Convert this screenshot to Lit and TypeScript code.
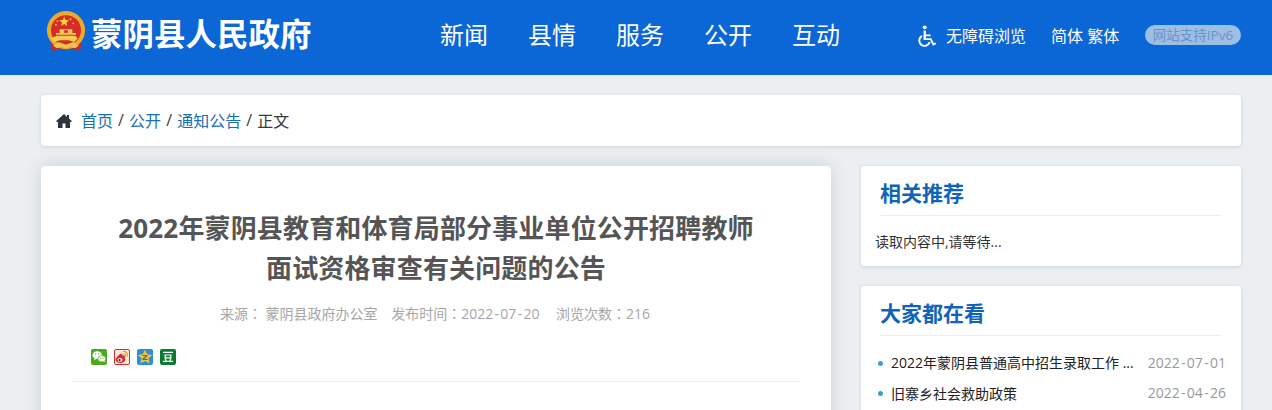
import { LitElement, html, css, svg } from "lit";
import { customElement } from "lit/decorators.js";

const emblem = svg`<svg class="emblem" viewBox="0 0 44 46" width="40" height="42">
  <path d="M7 32h30l2 8-4 4-6-3-7 2-7-2-6 3-4-4z" fill="#c9292a"/>
  <circle cx="22" cy="21" r="21" fill="#e8ab2c"/>
  <circle cx="22" cy="21" r="16.500" fill="#d62c27"/>
  <path d="M20 6l1.500 3.800 4 .2-3.100 2.500 1 3.900-3.400-2.200-3.400 2.200 1-3.900-3.100-2.500 4-.2z" fill="#f6d23f"/>
  <circle cx="12.500" cy="11" r="1" fill="#f6d23f"/><circle cx="27" cy="9" r="1" fill="#f6d23f"/><circle cx="30" cy="13.500" r="1" fill="#f6d23f"/><circle cx="11" cy="15" r="1" fill="#f6d23f"/>
  <path d="M11 24h22v2H11zM15 20h14v4H15zM12 27h20l3 3-4 4-6-2h-10l-6 2-4-4z" fill="#f4cb52"/>
  <path d="M20 21h4v3h-4z" fill="#d62c27"/>
  <path d="M8 38l6-4 8 3 8-3 6 4-4 3-5-2-5 2-5-2-5 2z" fill="#f2c64a"/>
</svg>`;

const wheelchair = svg`<svg class="wc" viewBox="0 0 20 24" width="18" height="22" fill="#fff">
  <circle cx="7.500" cy="2.400" r="2.200"/>
  <path d="M6.200 6h2.600v4.200h5.200v2H8.800v2.300h6l2.800 5.600 1.900-.8.800 1.800-3.700 1.600-3.100-6.200H6.200z"/>
  <path d="M4.600 10.800v2.300a4.800 4.800 0 1 0 7.200 5.600h2.200A6.900 6.900 0 1 1 4.600 10.800z"/>
</svg>`;

const home = svg`<svg class="home" viewBox="0 0 16 14" width="16" height="14">
  <path d="M8 0L0 7.200l1 1.100L2 7.400V14h4.500V9.500h3V14H14V7.400l1 .9 1-1.100-3-2.700V1h-2v2.100z" fill="#2b3340"/>
</svg>`;

const wechat = svg`<svg class="si" viewBox="0 0 16 16" width="16" height="16">
  <rect width="16" height="16" rx="2" fill="#4aab1c"/>
  <ellipse cx="6.200" cy="6.200" rx="4.700" ry="3.900" fill="#fff"/><path d="M3.800 9l-.6 2.200 2.600-1.400z" fill="#fff"/>
  <ellipse cx="10.800" cy="9.800" rx="3.900" ry="3.200" fill="#fff" stroke="#4aab1c" stroke-width=".7"/><path d="M12.400 12.300l1.400 1.100-.3-2z" fill="#fff"/>
  <circle cx="4.700" cy="5" r=".7" fill="#4aab1c"/><circle cx="7.800" cy="5" r=".7" fill="#4aab1c"/>
  <circle cx="9.500" cy="9.200" r=".5" fill="#4aab1c"/><circle cx="12" cy="9.200" r=".5" fill="#4aab1c"/>
</svg>`;
const weibo = svg`<svg class="si" viewBox="0 0 16 16" width="16" height="16">
  <rect x=".5" y=".5" width="15" height="15" rx="1.500" fill="#fbe9d8" stroke="#cf3030"/>
  <ellipse cx="6.400" cy="10.600" rx="4.900" ry="3.300" fill="#d8282f"/>
  <path d="M2.500 9c1.800-3.700 5-5.300 5.800-3.800.3 1 .1 1.600.1 1.600s2.200-.7 2.700.3c.3.700-.1 1.500-.1 1.500z" fill="#d8282f"/>
  <ellipse cx="6" cy="10.800" rx="2.500" ry="1.900" fill="#fff"/><circle cx="5.600" cy="11" r="1.100" fill="#222"/>
  <path d="M8.800 2.500c3.200-.5 5.200 1.500 4.700 5M9.300 4.800c1.700-.3 2.700.8 2.300 2.400" fill="none" stroke="#ef9a2a" stroke-width="1.200"/>
</svg>`;
const qzone = svg`<svg class="si" viewBox="0 0 16 16" width="16" height="16">
  <rect width="16" height="16" rx="2" fill="#2b8fe0"/>
  <path d="M8 .8l2.200 4.500 5 .6-3.700 3.400 1 5L8 11.900l-4.500 2.400 1-5L.8 5.900l5-.6z" fill="#f8c72a"/>
  <path d="M5.400 5.900h5.200v1.100L7.400 9.700h3.300v1.200H5.300V9.800l3.200-2.700H5.400z" fill="#3a76b8"/>
</svg>`;
const douban = svg`<svg class="si" viewBox="0 0 16 16" width="16" height="16">
  <rect width="16" height="16" rx="2" fill="#0b7a30"/>
  <path d="M3 2.800h10v1.300H3zM4.500 5.400h7v4h-7zm1.300 1.100v1.800h4.400V6.500zM4.700 10l1.200-.4.900 2.100h2.400l.9-2.100 1.200.4-.8 1.700H13V13H3v-1.300h2.500z" fill="#fff"/>
</svg>`;

const cn = html`<span class="cn">：</span>`;
const date = (s: string) => {
  const [y, m, d] = s.split("-");
  return html`${y}<span class="hy">-</span>${m}<span class="hy">-</span>${d}`;
};

@customElement("app-root")
export class AppRoot extends LitElement {
  static styles = css`
    :host {
      display: block;
      width: 1272px;
      height: 410px;
      overflow: hidden;
      background: #ebeff2;
      font-family: "Open Sans", "Noto Sans CJK SC", sans-serif;
      color: #333;
    }
    .top {
      height: 75px;
      background: #0b66d6;
      display: flex;
      align-items: flex-start;
      padding-left: 46px;
      color: #fff;
      box-sizing: border-box;
    }
    .logo { display: flex; align-items: flex-start; padding-top: 11px; width: 354px; box-sizing: border-box; flex: none; }
    .emblem { flex: none; }
    .site {
      font-size: 31.500px;
      font-weight: 700;
      line-height: 46px;
      margin-left: 5px;
      white-space: nowrap;
    }
    .nav { display: flex; gap: 40px; width: 478px; flex: none; margin-left: 40px; padding-top: 17px; }
    .nav a { font-size: 24px; line-height: 36px; color: #fff; }
    .tools { display: flex; align-items: center; height: 70px; color: #fff; font-size: 16px; }
    .wc { margin-right: 10px; margin-top: 2px; }
    .tools .acc { width: 105px; }
    .tools .lang { width: 94px; }
    .ipv6 {
      width: 96px; height: 20px; line-height: 20px; border-radius: 10px;
      background: #9dbfe6; color: #6d92c0; font-size: 13.500px; text-align: center;
      white-space: nowrap;
    }
    .wrap { padding: 20px 31px 0 41px; display: flex; flex-direction: column; gap: 20px; }
    .card {
      background: #fff;
      border-radius: 4px;
      box-shadow: 0 1px 4px rgba(0, 0, 0, 0.12);
    }
    .crumb {
      height: 51px;
      display: flex;
      align-items: center;
      padding: 0 0 2px 15px;
      box-sizing: border-box;
      font-size: 16px;
      color: #3a3a3a;
    }
    .home { margin: 2px 9px 0 0; }
    .crumb a { color: #1a6fb0; }
    .crumb .sep { margin: 0 5.100px; }
    .cols { display: flex; gap: 30px; align-items: flex-start; }
    .main {
      width: 790px;
      height: 400px;
      flex: none;
      padding: 0 31px;
      box-sizing: border-box;
      box-shadow: 0 0 18px rgba(0, 0, 0, 0.13);
    }
    h1 {
      margin: 0;
      padding: 42px 0 0;
      font-size: 26px;
      line-height: 40px;
      font-weight: 700;
      letter-spacing: 0.15px;
      color: #555;
      text-align: center;
    }
    .meta {
      margin-top: 15px;
      padding-right: 2px;
      font-size: 14px;
      line-height: 20px;
      color: #a6a6a6;
      text-align: center;
    }
    .meta .m { margin: 0 6px; }
    .meta .m.a { margin-right: 4px; }
    .meta .m.c { margin-left: 7px; }
    .cn { font-family: "Noto Sans CJK TC", sans-serif; }
    .hy { margin: 0 1.300px; }
    .share {
      display: flex;
      gap: 7px;
      padding: 25px 0 16px 19px;
      border-bottom: 1px solid #eee;
    }
    .si { display: block; }
    .side { width: 380px; flex: none; display: flex; flex-direction: column; gap: 20px; }
    .box { padding: 0 15px 0 15px; }
    .box h3 {
      margin: 0 5px 0 4px;
      padding: 12px 0 6px;
      height: 31px;
      font-size: 21px;
      line-height: 31px;
      font-weight: 700;
      color: #0f64b8;
      border-bottom: 1px solid #eee;
      box-sizing: content-box;
    }
    .box.one { height: 100px; box-sizing: border-box; }
    .load { margin: 16px 0 0 -1px; font-size: 14px; line-height: 20px; color: #333; }
    .box.two { height: 200px; box-sizing: border-box; }
    ul { list-style: none; margin: 11px 0 0; padding: 0; }
    li { display: flex; align-items: center; height: 30.500px; font-size: 14px; color: #222; }
    li::before {
      content: ""; width: 5px; height: 5px; border-radius: 50%;
      background: #3d9dd0; margin: 2px 8px 0 2px; flex: none;
    }
    li .t { flex: 1; white-space: nowrap; overflow: hidden; }
    li .d { color: #999; flex: none; }
  `;

  render() {
    return html`
      <div class="top">
        <div class="logo">${emblem}<div class="site">蒙阴县人民政府</div></div>
        <nav class="nav"><a>新闻</a><a>县情</a><a>服务</a><a>公开</a><a>互动</a></nav>
        <div class="tools">
          ${wheelchair}
          <span class="acc">无障碍浏览</span>
          <span class="lang">简体 繁体</span>
          <span class="ipv6">网站支持IPv6</span>
        </div>
      </div>
      <div class="wrap">
        <div class="card crumb">
          ${home}<a>首页</a><span class="sep">/</span><a>公开</a><span class="sep">/</span><a>通知公告</a><span class="sep">/</span>正文
        </div>
        <div class="cols">
          <div class="card main">
            <h1>2022年蒙阴县教育和体育局部分事业单位公开招聘教师<br />面试资格审查有关问题的公告</h1>
            <div class="meta"><span class="m a">来源${cn} 蒙阴县政府办公室</span> <span class="m">发布时间${cn}${date("2022-07-20")}</span> <span class="m c">浏览次数${cn}216</span></div>
            <div class="share">${wechat}${weibo}${qzone}${douban}</div>
          </div>
          <div class="side">
            <div class="card box one">
              <h3>相关推荐</h3>
              <div class="load">读取内容中,请等待...</div>
            </div>
            <div class="card box two">
              <h3>大家都在看</h3>
              <ul>
                <li><span class="t">2022年蒙阴县普通高中招生录取工作 ...</span><span class="d">${date("2022-07-01")}</span></li>
                <li><span class="t">旧寨乡社会救助政策</span><span class="d">${date("2022-04-26")}</span></li>
              </ul>
            </div>
          </div>
        </div>
      </div>
    `;
  }
}
